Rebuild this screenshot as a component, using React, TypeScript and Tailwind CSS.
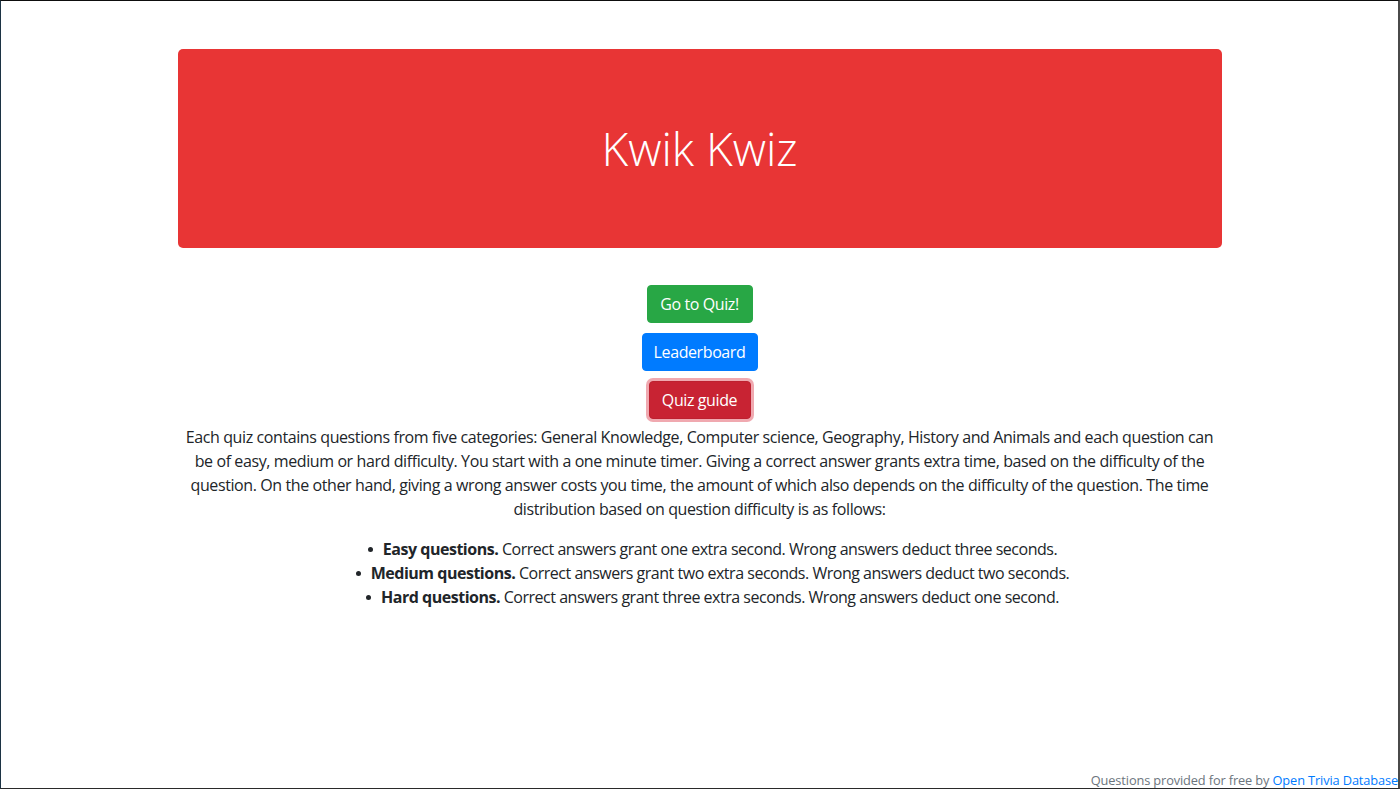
import React from "react";

function Bullet() {
  return <span className="inline-block w-[5px] h-[5px] rounded-full bg-[#212529] mr-[10px] align-middle relative -top-[1px]" />;
}

export default function App() {
  const font = { fontFamily: '"Open Sans", "Noto Sans", sans-serif' };
  return (
    <div
      style={font}
      className="w-[1400px] h-[789px] bg-white border-t border-t-[#0d0d0d] border-l border-l-[#1c3344] border-r-2 border-r-[#4a4a4a] border-b border-b-[#2a2a2a] flex flex-col items-center text-[#212529] tracking-[-0.025em] overflow-hidden"
    >
      <div className="mt-[48px] w-[1044px] h-[199px] shrink-0 rounded-[5px] bg-[#e83535] flex items-center justify-center">
        <h1 className="text-[46px] font-light leading-[1.2] text-white tracking-normal">Kwik Kwiz</h1>
      </div>

      <div className="mt-[37px] flex flex-col items-center gap-[10px]">
        <button className="w-[106px] h-[38px] rounded-[4px] bg-[#28a745] border border-[#28a745] text-white text-[16px] leading-[24px]">
          Go to Quiz!
        </button>
        <button className="w-[116px] h-[38px] rounded-[4px] bg-[#007bff] border border-[#007bff] text-white text-[16px] leading-[24px]">
          Leaderboard
        </button>
        <button className="w-[102px] h-[38px] rounded-[4px] bg-[#c82333] border border-[#bd2130] text-white text-[16px] leading-[24px] shadow-[0_0_0_3px_rgba(225,83,97,0.5)]">
          Quiz guide
        </button>
      </div>

      <p className="mt-[6px] w-[1044px] text-center text-[16px] leading-[24px] whitespace-nowrap">
        Each quiz contains questions from five categories: General Knowledge, Computer science, Geography, History and Animals and each question can
        <br />
        be of easy, medium or hard difficulty. You start with a one minute timer. Giving a correct answer grants extra time, based on the difficulty of the
        <br />
        question. On the other hand, giving a wrong answer costs you time, the amount of which also depends on the difficulty of the question. The time
        <br />
        distribution based on question difficulty is as follows:
      </p>

      <ul className="mt-4 w-[1044px] pl-[26px] list-none text-center text-[16px] leading-[24px] whitespace-nowrap tracking-[-0.03em]">
        <li>
          <Bullet />
          <b className="font-bold">Easy questions.</b> Correct answers grant one extra second. Wrong answers deduct three seconds.
        </li>
        <li>
          <Bullet />
          <b className="font-bold">Medium questions.</b> Correct answers grant two extra seconds. Wrong answers deduct two seconds.
        </li>
        <li>
          <Bullet />
          <b className="font-bold">Hard questions.</b> Correct answers grant three extra seconds. Wrong answers deduct one second.
        </li>
      </ul>

      <footer className="mt-auto self-end text-[12.8px] leading-[15px] tracking-[-0.01em] text-[#6c757d] whitespace-nowrap">
        Questions provided for free by <a className="text-[#007bff]" href="#">Open Trivia Database</a>
      </footer>
    </div>
  );
}
